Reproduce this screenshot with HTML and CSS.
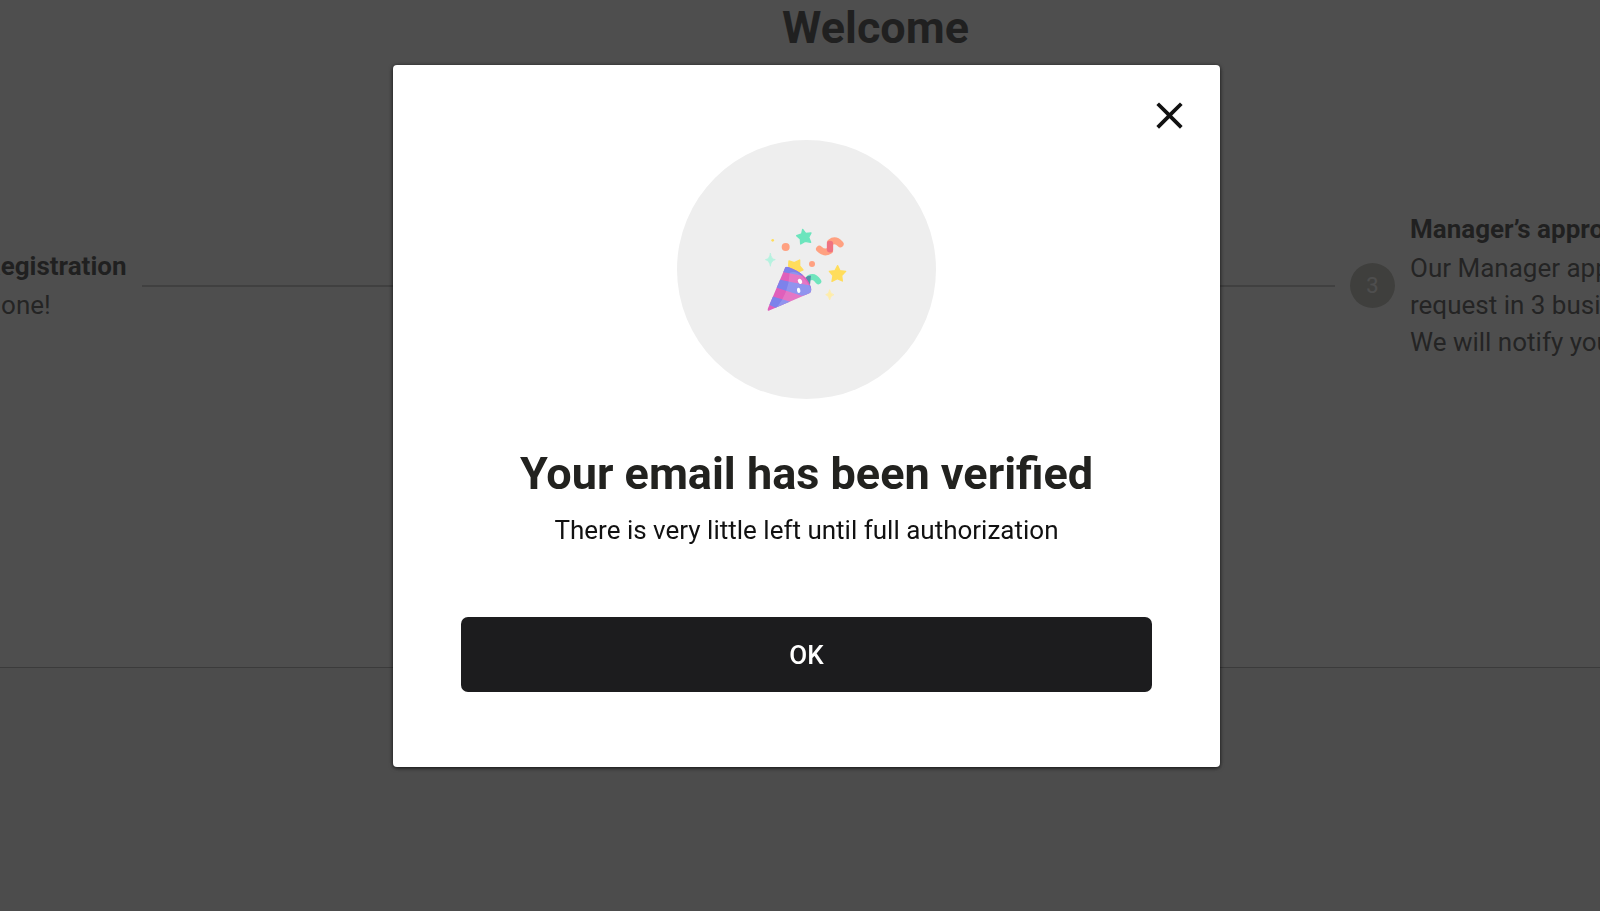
FILE: index.html
```html
<!DOCTYPE html>
<html lang="en">
  <head>
    <meta charset="utf-8">
    <title>Welcome</title>
    <link rel="stylesheet" href="styles.css">
  </head>
  <body>
    <main class="page">
      <section class="card">
        <h1 class="title">Welcome</h1>
        <div class="steps">
          <div class="step">
            <span class="step-number">1</span>
            <div class="step-text">
              <h3>Registration</h3>
              <p>Done!</p>
            </div>
          </div>
          <div class="step-line"></div>
          <div class="step step-last">
            <span class="step-number">3</span>
            <div class="step-text">
              <h3>Manager’s approval</h3>
              <p>Our Manager approves your<br>request in 3 business days.<br>We will notify you by email</p>
            </div>
          </div>
        </div>
      </section>
    </main>

    <div class="overlay">
      <div class="modal" role="dialog" aria-modal="true" aria-labelledby="modal-title">
        <button class="close-button" type="button" aria-label="Close">
          <svg viewBox="0 0 24 24" width="45" height="45" fill="#111">
            <path d="M19 6.41 17.59 5 12 10.59 6.41 5 5 6.41 10.59 12 5 17.59 6.41 19 12 13.41 17.59 19 19 17.59 13.41 12z" />
          </svg>
        </button>
        <div class="picture">
          <svg viewBox="5 0 390 360" width="130" height="120" aria-hidden="true">
            <defs>
              <clipPath id="cone">
                <path d="M134 174Q136 168 144 171Q204 192 213 238Q214 246 207 250L85 302Q80 303 82 297Z" />
              </clipPath>
            </defs>
            <!-- star behind the cone -->
            <path d="M146 153L162 158L178 150L178 168L188 180L176 185L163 197L155 180L145 168Z" fill="#ffdd5c" stroke="#ffdd5c" stroke-width="4" stroke-linejoin="round" />
            <!-- green ribbon -->
            <path d="M208 203Q222 196 234 214" fill="none" stroke="#6fe5bd" stroke-width="18" stroke-linecap="round" />
            <path d="M194 204Q200 196 212 197L209 226L199 218Z" fill="#5291a8" />
            <!-- cone -->
            <g clip-path="url(#cone)">
              <rect x="75" y="160" width="150" height="150" fill="#e05fbb" />
              <path d="M100 150H220L186 197L110 183ZM100 205L155 217L225 229V252L184 257L100 230ZM80 254L150 275L120 300L80 281Z" fill="#7d82eb" />
              <path d="M148 188Q180 176 213 238L214 252L108 294Q145 250 148 188Z" fill="#fff" opacity=".15" />
            </g>
            <ellipse cx="179" cy="214" rx="6" ry="8" fill="#fff" transform="rotate(-30 179 214)" />
            <ellipse cx="175" cy="241" rx="5" ry="8" fill="#fff" transform="rotate(-12 175 241)" />
            <!-- orange ribbon -->
            <path d="M237 117Q252 132 268 122M270 97Q285 86 300 102" fill="none" stroke="#ffa181" stroke-width="20" stroke-linecap="round" />
            <path d="M269 102V118" fill="none" stroke="#ef7280" stroke-width="19" stroke-linecap="round" />
            <!-- stars and dots -->
            <path d="M187 58L196 70L212 69L205 82L211 97L194 94L181 102L180 87L169 77L184 72Z" fill="#6ce5bd" stroke="#6ce5bd" stroke-width="4" stroke-linejoin="round" />
            <path d="M292 167L299 182L316 184L304 197L306 213L291 206L275 214L278 197L267 184L284 182Z" fill="#ffdd5c" stroke="#ffdd5c" stroke-width="4" stroke-linejoin="round" />
            <path d="M90 129Q92 147 105 149Q92 152 90 169Q88 152 75 149Q88 147 90 129Z" fill="#b5f2df" stroke="#b5f2df" stroke-width="2" />
            <path d="M268 239Q270 252 281 254Q270 257 268 270Q266 257 256 254Q266 252 268 239Z" fill="#ffeda8" stroke="#ffeda8" stroke-width="2" />
            <circle cx="136" cy="111" r="12" fill="#ffa181" />
            <circle cx="215" cy="162" r="9" fill="#ffa181" />
            <circle cx="97" cy="91" r="4" fill="#ffdd5c" />
          </svg>
        </div>
        <h2 id="modal-title">Your email has been verified</h2>
        <p class="message">There is very little left until full authorization</p>
        <button class="ok-button" type="button">OK</button>
      </div>
    </div>
  </body>
</html>
```
FILE: styles.css
```css
* {
  box-sizing: border-box;
}

body {
  font-family: Roboto, Arial, sans-serif;
  font-size: 26px;
  line-height: 38px;
  color: #1c1c1c;
  background-color: #f6f6f6;
  margin: 0;
  overflow: hidden;
}

h1,
h2,
h3,
p {
  margin: 0;
}

/* the stepper is wider than the window */
.page {
  margin: 0 -227px 0 -76px;
}

.card {
  background-color: #fff;
  padding-bottom: 306px;
  border-bottom: 1px solid #a0a0a0;
  box-shadow: 0 2px 4px rgba(0, 0, 0, 0.6);
}

.title {
  font-size: 45px;
  line-height: 56px;
  text-align: center;
}

.steps {
  display: flex;
  align-items: center;
  gap: 15px;
  padding-top: 154px;
}

.step {
  display: flex;
  align-items: center;
  gap: 15px;
}

.step-last {
  width: 477px;
}

.step-number {
  flex: none;
  width: 45px;
  height: 45px;
  border-radius: 50%;
  background-color: #b4b4aa;
  color: #fff;
  font-size: 22px;
  line-height: 45px;
  text-align: center;
}

.step-text h3 {
  font-size: 26px;
  margin-bottom: 2px;
}

.step-text p {
  line-height: 37px;
  color: #303030;
}

.step-line {
  flex: 1;
  height: 2px;
  background-color: #b8b8b8;
}

.overlay {
  position: fixed;
  inset: 0;
  display: flex;
  justify-content: center;
  align-items: flex-start;
  padding: 65px 0 0 13px;
  background-color: rgba(34, 34, 34, 0.8);
}

.modal {
  position: relative;
  display: flex;
  flex-direction: column;
  align-items: center;
  width: 827px;
  max-width: 100%;
  padding: 75px 68px;
  background-color: #fff;
  border-radius: 4px;
  box-shadow: 0 1px 4px rgba(0, 0, 0, 0.8);
  text-align: center;
}

.close-button {
  position: absolute;
  top: 28px;
  right: 28px;
  padding: 0;
  border: none;
  background: none;
  cursor: pointer;
}

.close-button svg {
  display: block;
}

.picture {
  display: flex;
  align-items: center;
  justify-content: center;
  width: 259px;
  height: 259px;
  margin-bottom: 47px;
  border-radius: 50%;
  background-color: #eee;
}

.modal h2 {
  font-size: 45px;
  line-height: 56px;
  color: #22221f;
  margin-bottom: 9px;
}

.message {
  color: #111;
  margin-bottom: 68px;
}

.ok-button {
  width: 100%;
  height: 75px;
  border: none;
  border-radius: 7px;
  background-color: #1c1c1e;
  color: #fff;
  font-family: inherit;
  font-size: 26px;
  font-weight: 500;
  cursor: pointer;
}
```
